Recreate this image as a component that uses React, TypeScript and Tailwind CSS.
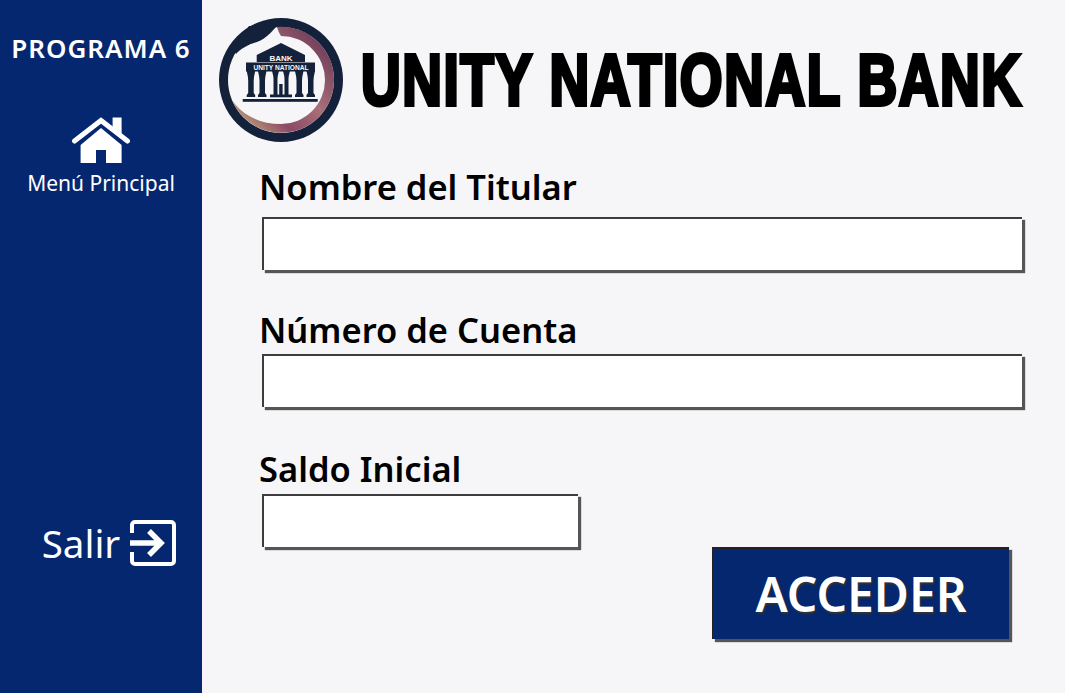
const uiFont = "font-['Noto_Sans','Open_Sans',sans-serif]";

const columnXs = [27.7, 39, 76, 87.5];

function Logo() {
  return (
    <svg width="124" height="124" viewBox="0 0 124 124" className="shrink-0">
      <defs>
        <linearGradient id="ring" x1="0.9" y1="0.1" x2="0.1" y2="0.9">
          <stop offset="0" stopColor="#6d3a58" />
          <stop offset="0.45" stopColor="#a87078" />
          <stop offset="0.75" stopColor="#8c4a66" />
          <stop offset="1" stopColor="#b89a78" />
        </linearGradient>
      </defs>
      <circle cx="62" cy="62" r="62" fill="#14213a" />
      <circle cx="62" cy="62" r="53" fill="#f6f6f9" />
      <path d="M58 9 A53 53 0 1 1 13 82 C22 96 40 106 62 106 A44 44 0 0 0 62 18 C60 15 59 12 58 9 Z" fill="url(#ring)" />
      <path d="M58 8 L30 8 L13 30 L17 36 C21 31 30 26 38 24 C48 20 52 14 58 8 Z" fill="#14213a" />
      <path d="M62 25 L37.7 37 V44 H86 V37 Z" fill="#14213a" />
      <text x="62" y="42.5" textAnchor="middle" fill="#f6f6f9" fontSize="8" fontWeight="700" fontFamily="Liberation Sans, sans-serif">BANK</text>
      <rect x="27" y="44.5" width="69" height="9" fill="#14213a" />
      <text x="62" y="52" textAnchor="middle" fill="#f6f6f9" fontSize="6.6" fontWeight="700" fontFamily="Liberation Sans, sans-serif">UNITY NATIONAL</text>
      {columnXs.map((x) => (
        <path
          key={x}
          d={`M${x} 53 h8.5 q-1.5 6 -1.5 10 v12 l1.5 2 v2 h-8.5 v-2 l1.5 -2 v-12 q0 -4 -1.5 -10 z`}
          fill="#14213a"
        />
      ))}
      <path d="M53 53 h7 q-1.5 5 -1.5 8 v16 h-4 v-16 q0 -3 -1.5 -8 z M71 53 h-7 q1.5 5 1.5 8 v16 h4 v-16 q0 -3 1.5 -8 z" fill="#14213a" />
      <rect x="60.2" y="66" width="3.4" height="11" fill="#14213a" />
      <rect x="51" y="76.5" width="22" height="2.8" fill="#14213a" />
      <rect x="23.7" y="81" width="75" height="2.8" fill="#14213a" />
    </svg>
  );
}

function Field({
  label,
  short,
  top,
  inputTop,
}: {
  label: string;
  short?: boolean;
  top: string;
  inputTop: string;
}) {
  return (
    <div className={top}>
      <div className="text-[34.5px] leading-[40px] font-semibold text-black whitespace-nowrap">{label}</div>
      <div
        className={`ml-[3px] h-[53px] bg-white border-t-2 border-l-2 border-[#3d3d3d] shadow-[3px_3px_1px_#555] ${inputTop} ${
          short ? "w-[316px]" : "w-[760px]"
        }`}
      />
    </div>
  );
}

export default function App() {
  return (
    <div className={`flex h-[693px] w-[1065px] overflow-hidden bg-[#f6f6f9] ${uiFont}`}>
      <aside className="flex w-[202px] shrink-0 flex-col items-center bg-[#04276f] text-white">
        <div className="mt-[31px] text-[26px] leading-[34px] font-semibold tracking-[1px] whitespace-nowrap">PROGRAMA 6</div>
        <svg width="60" height="50" viewBox="0 0 60 50" className="mt-[52px]" fill="white">
          <path d="M3.5 24 L30 3.5 L56.5 24" fill="none" stroke="white" strokeWidth="5" strokeLinecap="round" strokeLinejoin="miter" />
          <path d="M41.6 0.6 H50.6 V18 L41.6 11 Z" />
          <path d="M30 11 L50.6 28 V46 H35 V33 H25 V46 H9.6 V28 Z" />
        </svg>
        <div className="mt-[1px] text-[21px] leading-[30px] whitespace-nowrap">Menú Principal</div>
        <div className="ml-[16px] mt-[320px] flex items-center gap-[10px]">
          <span className="text-[38.5px] leading-[50px]">Salir</span>
          <svg width="46" height="46" viewBox="0 0 46 46" fill="none" stroke="white">
            <path d="M2 13 V5 a3 3 0 0 1 3 -3 H41 a3 3 0 0 1 3 3 V41 a3 3 0 0 1 -3 3 H5 a3 3 0 0 1 -3 -3 V32" strokeWidth="4" />
            <path d="M0 23 H31 M19 11 L31 23 L19 35" strokeWidth="5.5" />
          </svg>
        </div>
      </aside>
      <main className="flex flex-1 flex-col">
        <header className="ml-[17px] mt-[18px] flex items-center gap-[18px]">
          <Logo />
          <h1 className="w-[662px] origin-left scale-x-[0.764] font-['Liberation_Sans',sans-serif] text-[72px] leading-[90px] font-bold tracking-[2px] text-black [-webkit-text-stroke:4px_black] whitespace-nowrap">
            UNITY NATIONAL BANK
          </h1>
        </header>
        <div className="ml-[57px]">
          <Field label="Nombre del Titular" top="mt-[25px]" inputTop="mt-[10px]" />
          <Field label="Número de Cuenta" top="mt-[40px]" inputTop="mt-[4px]" />
          <Field label="Saldo Inicial" short top="mt-[42px]" inputTop="mt-[5px]" />
        </div>
        <div className="ml-[510px] mt-0 flex h-[92px] w-[297px] items-center justify-center border-t-2 border-l border-[#222] bg-[#04276f] text-[48px] font-semibold text-white shadow-[3px_3px_1px_#555] [text-shadow:1px_2px_2px_#333]">
          ACCEDER
        </div>
      </main>
    </div>
  );
}
